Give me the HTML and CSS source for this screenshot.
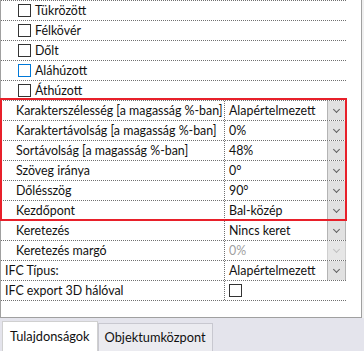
FILE: index.html
```html
<!DOCTYPE html>
<html lang="hu">
<head>
    <meta charset="UTF-8">
    <meta name="viewport" content="width=device-width, initial-scale=1.0">
    <title>Tulajdonságok</title>
    <link rel="stylesheet" href="styles.css">
</head>
<body>
    <div class="panel">
        <div class="grid">
            <!-- checkbox rows -->
            <div class="row"><span class="check"></span><span class="label">Tükrözött</span></div>
            <div class="row"><span class="check"></span><span class="label">Félkövér</span></div>
            <div class="row"><span class="check"></span><span class="label">Dőlt</span></div>
            <div class="row"><span class="check focus"></span><span class="label">Aláhúzott</span></div>
            <div class="row"><span class="check"></span><span class="label">Áthúzott</span></div>

            <!-- property rows -->
            <div class="row prop">
                <div class="name sub">Karakterszélesség [a magasság %-ban]</div>
                <div class="value"><span class="text">Alapértelmezett</span><span class="drop"></span></div>
            </div>
            <div class="row prop">
                <div class="name sub">Karaktertávolság [a magasság %-ban]</div>
                <div class="value"><span class="text">0%</span><span class="drop"></span></div>
            </div>
            <div class="row prop">
                <div class="name sub">Sortávolság [a magasság %-ban]</div>
                <div class="value"><span class="text">48%</span><span class="drop"></span></div>
            </div>
            <div class="row prop">
                <div class="name sub">Szöveg iránya</div>
                <div class="value"><span class="text">0°</span><span class="drop"></span></div>
            </div>
            <div class="row prop">
                <div class="name sub">Dőlésszög</div>
                <div class="value"><span class="text">90°</span><span class="drop"></span></div>
            </div>
            <div class="row prop">
                <div class="name sub">Kezdőpont</div>
                <div class="value"><span class="text">Bal-közép</span><span class="drop"></span></div>
            </div>
            <div class="row prop">
                <div class="name sub">Keretezés</div>
                <div class="value"><span class="text">Nincs keret</span><span class="drop"></span></div>
            </div>
            <div class="row prop">
                <div class="name sub">Keretezés margó</div>
                <div class="value disabled"><span class="text">0%</span><span class="drop"></span></div>
            </div>
            <div class="row prop">
                <div class="name">IFC Típus:</div>
                <div class="value"><span class="text">Alapértelmezett</span><span class="drop"></span></div>
            </div>
            <div class="row prop">
                <div class="name">IFC export 3D hálóval</div>
                <div class="value"><span class="check"></span></div>
            </div>
        </div>

        <!-- highlight frame -->
        <div class="highlight"></div>
    </div>

    <div class="tabs">
        <div class="tab active">Tulajdonságok</div>
        <div class="tab">Objektumközpont</div>
    </div>
</body>
</html>
```

FILE: styles.css
```css
body {
    margin: 0;
    padding: 0;
    width: 364px;
    height: 351px;
    overflow: hidden;
    background-color: #f0f0f0;
    font-family: Lato, "Noto Sans", sans-serif;
    font-size: 12.4px;
    color: #111;
}

.panel {
    position: relative;
    width: 360px;
    height: 317px;
    background-color: #fff;
    border-left: 1px solid #a0a0a0;
    border-right: 1px solid #a0a0a0;
    border-bottom: 1px solid #a0a0a0;
}

.grid {
    width: 345px;
    border-top: 1px dotted #707070;
}

.row {
    display: flex;
    align-items: center;
    height: 19px;
    border-bottom: 1px dotted #707070;
    line-height: 19px;
    white-space: nowrap;
}

.check {
    display: inline-block;
    flex: none;
    width: 11px;
    height: 11px;
    border: 1px solid #333;
    background-color: #fff;
    margin-left: 17px;
}

.check.focus {
    border-color: #0078d7;
}

.label {
    margin-left: 4px;
}

.prop .name {
    width: 219px;
    height: 19px;
    padding-left: 4px;
    border-right: 1px dotted #707070;
    overflow: hidden;
}

.prop .name.sub {
    width: 208px;
    padding-left: 15px;
}

.value {
    flex: 1;
    display: flex;
    align-items: center;
    height: 19px;
    padding-left: 4px;
}

.value .text {
    flex: 1;
}

.value .check {
    margin-left: 0;
}

.drop {
    position: relative;
    width: 17px;
    height: 19px;
    background-color: #e1e1e1;
    border-left: 1px solid #b4b4b4;
    border-right: 1px solid #b4b4b4;
}

.drop::after {
    content: "";
    position: absolute;
    left: 6px;
    top: 6px;
    width: 4px;
    height: 4px;
    border-right: 1px solid #606060;
    border-bottom: 1px solid #606060;
    transform: rotate(45deg);
}

.disabled {
    color: #a0a0a0;
}

.disabled .drop {
    background-color: #e6e6e6;
    border-color: #cfcfcf;
}

.disabled .drop::after {
    border-color: #c0c0c0;
}

.highlight {
    position: absolute;
    left: -1px;
    top: 98px;
    width: 343px;
    height: 119px;
    border: 2px solid #e8202a;
    pointer-events: none;
}

.tabs {
    display: flex;
    align-items: flex-end;
    height: 33px;
    padding-left: 2px;
    background-color: #e4e4ec;
}

.tab {
    height: 27px;
    line-height: 27px;
    padding: 0 6px;
    font-size: 12.8px;
    border: 1px solid #c8c8d0;
    border-bottom: none;
    background-color: #ebebf0;
}

.tab.active {
    height: 29px;
    line-height: 29px;
    padding: 0 7px;
    background-color: #fff;
    border-color: #d0d0d0;
}
```
